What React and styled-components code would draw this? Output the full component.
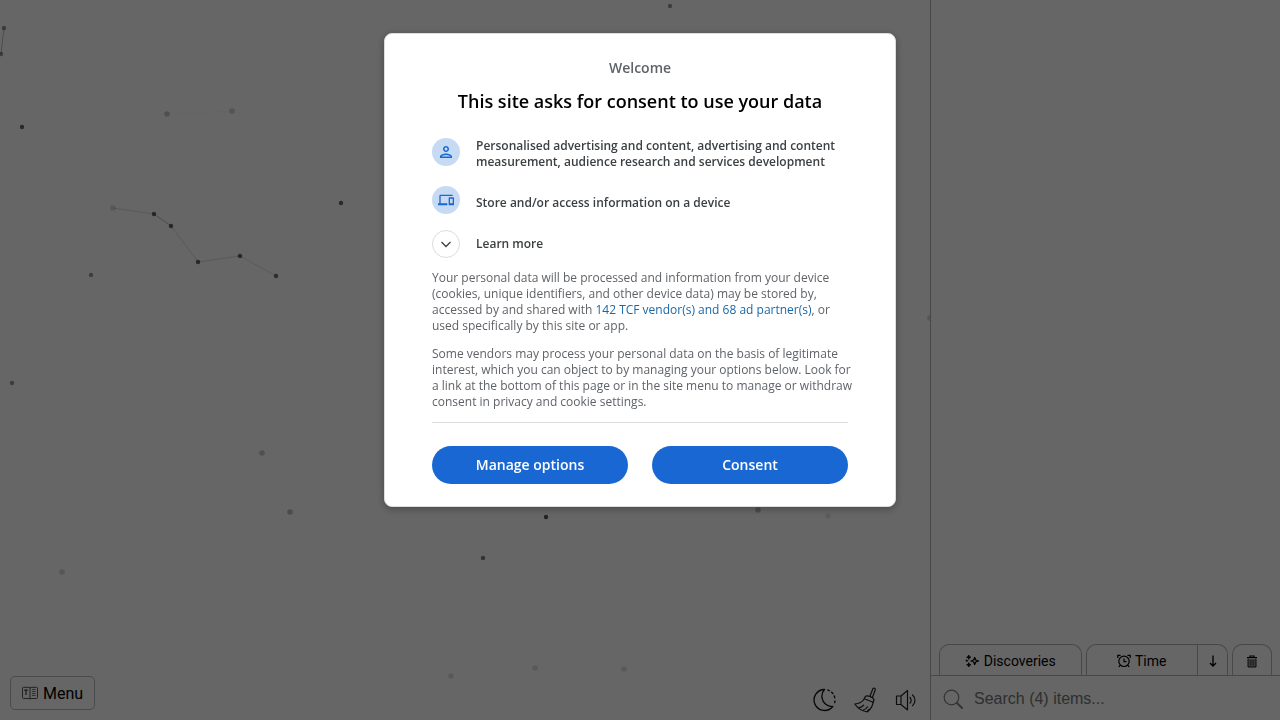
import React, { useState } from 'react';
import styled, { createGlobalStyle } from 'styled-components';
import { MdOutlinePerson, MdOutlineDevices } from 'react-icons/md';

const GlobalStyle = createGlobalStyle`
    * {
        box-sizing: border-box;
    }
    body {
        margin: 0;
        background-color: #fff;
        font-family: Roboto, "Liberation Sans", sans-serif;
    }
    button {
        font-family: inherit;
        cursor: pointer;
    }
    h1, p, ul {
        margin: 0;
        padding: 0;
    }
`;

const Page = styled.div`
    display: flex;
    min-height: 100vh;
`;

const Board = styled.main`
    position: relative;
    flex: 1;
    min-width: 0;
    display: flex;
    align-items: flex-end;
    justify-content: space-between;
`;

const Sky = styled.svg`
    position: absolute;
    inset: 0;
    width: 100%;
    height: 100%;
`;

const MenuButton = styled.button`
    position: relative;
    display: flex;
    align-items: center;
    gap: 5px;
    height: 34px;
    margin: 10px;
    padding: 0 11px;
    border: 1px solid #b9b9b9;
    border-radius: 5px;
    background-color: #fff;
    color: #000;
    font-size: 16px;
`;

const Tools = styled.div`
    position: relative;
    display: flex;
    align-items: center;
    gap: 17px;
    padding: 0 13px 7px;
`;

const ToolButton = styled.button`
    display: flex;
    padding: 0;
    border: none;
    background: none;
    color: #222;
`;

const Sidebar = styled.aside`
    width: 350px;
    display: flex;
    flex-direction: column;
    justify-content: flex-end;
    border-left: 1px solid #b4b4b4;
`;

const Tabs = styled.div`
    display: flex;
    gap: 4px;
    padding: 0 8px;
`;

const TabGroup = styled.div`
    display: flex;
    flex: ${(props) => (props.$small ? '0 0 40px' : '1')};
    height: 31px;
    border: 1px solid #b4b4b4;
    border-bottom: none;
    border-radius: 10px 10px 0 0;
`;

const Tab = styled.button`
    display: flex;
    flex: ${(props) => (props.$narrow ? '0 0 30px' : '1')};
    align-items: center;
    justify-content: center;
    gap: 4px;
    padding: 2px 0 0;
    border: none;
    border-left: ${(props) => (props.$narrow ? '1px solid #b4b4b4' : 'none')};
    background: none;
    color: #000;
    font-size: 14px;
`;

const SearchRow = styled.label`
    display: flex;
    align-items: center;
    gap: 10px;
    height: 45px;
    padding: 2px 12px 0;
    border-top: 1px solid #b4b4b4;
    color: #808080;
`;

const SearchInput = styled.input`
    flex: 1;
    min-width: 0;
    padding: 0;
    border: none;
    outline: none;
    background: none;
    font-family: "Liberation Sans", Arial, sans-serif;
    font-size: 16px;
    &::placeholder {
        color: #757575;
        opacity: 1;
    }
`;

const Overlay = styled.div`
    position: fixed;
    inset: 0;
    display: flex;
    justify-content: center;
    align-items: flex-start;
    padding: 33px 16px;
    overflow: auto;
    background-color: rgba(0, 0, 0, 0.6);
`;

const Dialog = styled.section`
    width: 100%;
    max-width: 512px;
    padding: 24px 47px 22px;
    border: 1px solid #dadce0;
    border-radius: 8px;
    background-color: #fff;
    box-shadow: 0 2px 8px rgba(0, 0, 0, 0.3);
    font-family: "Open Sans", "Noto Sans", sans-serif;
    color: #5f6368;
`;

const Welcome = styled.p`
    font-size: 14px;
    font-weight: 600;
    line-height: 20px;
    text-align: center;
`;

const Title = styled.h1`
    margin: 11px 0 25px;
    color: #000;
    font-size: 18px;
    font-weight: 600;
    line-height: 24px;
    text-align: center;
`;

const Purposes = styled.ul`
    display: flex;
    flex-direction: column;
    gap: 16px;
    list-style: none;
`;

const Purpose = styled.li`
    display: flex;
    gap: 16px;
    color: #3c4043;
    font-size: 12px;
    font-weight: 600;
    line-height: 16px;
`;

const PurposeText = styled.span`
    padding-top: ${(props) => (props.$single ? '9px' : '0')};
`;

const Circle = styled.span`
    display: flex;
    flex: 0 0 28px;
    align-items: center;
    justify-content: center;
    height: 28px;
    border: ${(props) => (props.$outline ? '1px solid #dadce0' : 'none')};
    border-radius: 50%;
    background-color: ${(props) => (props.$outline ? '#fff' : '#c6daf4')};
    color: ${(props) => (props.$outline ? '#3c4043' : '#1967d2')};
`;

const LearnMore = styled.button`
    display: flex;
    align-items: center;
    gap: 16px;
    padding: 0;
    border: none;
    background: none;
    color: inherit;
    font: inherit;
`;

const Text = styled.p`
    margin: 12px -4px 0 0;
    font-size: 12px;
    line-height: 16px;
    a {
        color: #1967a8;
        text-decoration: none;
    }
`;

const Actions = styled.div`
    display: flex;
    gap: 24px;
    margin-top: 12px;
    padding-top: 23px;
    border-top: 1px solid #dadce0;
`;

const ActionButton = styled.button`
    flex: 1;
    height: 38px;
    padding: 0 0 2px;
    border: none;
    border-radius: 19px;
    background-color: #1967d2;
    color: #fff;
    font-size: 14px;
    font-weight: 600;
`;

// x, y, opacity
const stars = [
    [4, 28, 0.4], [1, 54, 0.4], [22, 127, 0.6], [167, 114, 0.22], [232, 111, 0.18],
    [670, 6, 0.4], [341, 203, 0.6], [113, 208, 0.14], [154, 214, 0.6], [171, 226, 0.6],
    [198, 262, 0.6], [240, 256, 0.6], [276, 276, 0.55], [91, 275, 0.4], [12, 383, 0.4],
    [262, 453, 0.22], [290, 512, 0.25], [62, 572, 0.16], [546, 517, 0.65], [483, 558, 0.5],
    [758, 510, 0.25], [828, 516, 0.1], [535, 668, 0.13], [624, 669, 0.13], [451, 676, 0.13],
    [930, 318, 0.16],
];

const lines = [
    [4, 28, 1, 54, 0.25], [113, 208, 154, 214, 0.13], [154, 214, 171, 226, 0.25],
    [171, 226, 198, 262, 0.13], [198, 262, 240, 256, 0.15], [240, 256, 276, 276, 0.12],
    [167, 114, 232, 111, 0.02],
];

const StarSky = () => (
    <Sky viewBox="0 0 930 720" preserveAspectRatio="xMinYMin slice" aria-hidden="true">
        {lines.map(([x1, y1, x2, y2, o]) => (
            <line key={`${x1}-${y1}`} x1={x1} y1={y1} x2={x2} y2={y2} stroke="#000" strokeOpacity={o} />
        ))}
        {stars.map(([x, y, o]) => (
            <circle key={`${x}-${y}`} cx={x} cy={y} r={o < 0.35 ? 2.8 : 2.2} fillOpacity={o} />
        ))}
    </Sky>
);

const BookIcon = () => (
    <svg width="16" height="14" viewBox="0 0 16 14" fill="none" stroke="#555" strokeWidth="1">
        <path d="M8 2L7 1.300H1.500C.9 1.300.5 1.600.5 2.200V11.500C.5 12.100.9 12.500 1.500 12.500H7L8 13L9 12.500H14.500C15.100 12.500 15.500 12.100 15.500 11.500V2.200C15.500 1.600 15.100 1.300 14.500 1.300H9L8 2V13" />
        <path d="M10 3.500H13.500M10 5.500H13.500M10 7.500H13.500M10 9.500H13.500" strokeWidth=".8" />
        <path d="M2.500 4.500V4H5.500V4.500M4 4V9" stroke="#222" />
    </svg>
);

const MoonIcon = () => (
    <svg width="24" height="24" viewBox="0 0 24 24" fill="none" stroke="#111" strokeWidth="1.300" strokeLinecap="round" strokeLinejoin="round">
        <path d="M11.500 1.500A10.500 10.500 0 1 0 19.800 18.500C14.500 19 9.800 15 9 9.800C8.600 6.500 9.500 3.500 11.500 1.500Z" />
        <path d="M14.800 2L16.300 2.700M18.600 4.200L19.900 5.500M21.300 8L21.800 9.800M22 12.800L21.700 14.600" />
    </svg>
);

const BroomIcon = () => (
    <svg width="24" height="26" viewBox="0 0 24 26" fill="none" stroke="currentColor" strokeWidth="1.200" strokeLinecap="round" strokeLinejoin="round">
        <path d="M15.800 9.500L18.900 1.800C19.400.6 21.700 1.300 21.300 2.700L18.400 10.500" />
        <path d="M11.500 9.200C14 8.200 19.200 10.300 20.100 12.700L19.200 15.200L10.300 11.700Z" />
        <path d="M10.300 11.700C8 15.500 5 16.800.8 17C3.800 21.300 8.800 24.500 13.500 24.800C16.500 22.500 18.500 19.500 19.200 15.200" />
        <path d="M5 20.600C7 20.400 8.500 19.500 9.700 18.100M9 23.300C11 22.600 12.500 21.500 13.500 19.800M13.200 24.300L15 22.300" />
    </svg>
);

const SpeakerIcon = () => (
    <svg width="22" height="22" viewBox="0 0 22 22" fill="none" stroke="currentColor" strokeWidth="1.200" strokeLinecap="round" strokeLinejoin="round">
        <path d="M1.500 7H6V15.500H1.500ZM6 7L12.500 1.500V21L6 15.500" />
        <path d="M15 8.500C16.500 10 16.500 12.800 15 14.200M17.500 6C20.800 8.800 20.800 13.800 17.500 16.700" />
    </svg>
);

const SparklesIcon = () => (
    <svg width="15" height="14" viewBox="0 0 15 14" fill="none" stroke="#000" strokeWidth="1.300" strokeLinejoin="round">
        <path d="M9.700 3.500L10.700 6L13.500 7L10.700 8L9.700 10.500L8.700 8L6 7L8.700 6Z" />
        <path d="M3.800 1L4.400 2.600L6 3.200L4.400 3.800L3.800 5.400L3.200 3.800L1.600 3.200L3.200 2.600ZM3.800 8.600L4.400 10.200L6 10.800L4.400 11.400L3.800 13L3.200 11.400L1.600 10.800L3.200 10.200ZM1.800 5.700L2.800 6.700L1.800 7.700L.8 6.700Z" fill="#000" strokeWidth=".7" />
    </svg>
);

const ClockIcon = () => (
    <svg width="14" height="14" viewBox="0 0 14 14" fill="none" stroke="#000" strokeWidth="1.200">
        <circle cx="7" cy="7.300" r="5.200" />
        <path d="M7 4.500V7.700H9.500M.8 4V1.300H3.600M10.400 1.300H13.200V4M3 11.300L1.800 13M11 11.300L12.200 13" />
    </svg>
);

const ArrowIcon = () => (
    <svg width="8" height="12" viewBox="0 0 8 12" fill="none" stroke="#000" strokeWidth="1.300">
        <path d="M4 .5V11M1 8L4 11L7 8" />
    </svg>
);

const TrashIcon = () => (
    <svg width="12" height="13" viewBox="0 0 12 13" fill="none" stroke="#000">
        <path d="M1 2.500H11M4 2.500V1H8V2.500" strokeWidth="1.200" />
        <path d="M2 3.500V12H10V3.500" fill="#999" stroke="#222" />
        <path d="M4.500 5V10.500M6 5V10.500M7.500 5V10.500" stroke="#333" strokeWidth=".6" />
    </svg>
);

const ChevronIcon = () => (
    <svg width="12" height="12" viewBox="0 0 12 12" fill="none" stroke="currentColor" strokeWidth="1.300">
        <path d="M1.500 4L6 8.500L10.500 4" />
    </svg>
);

const SearchIcon = () => (
    <svg width="21" height="21" viewBox="0 0 21 21" fill="none" stroke="currentColor" strokeWidth="1.200" strokeLinecap="round">
        <circle cx="8.500" cy="8.500" r="7.300" />
        <path d="M14 14L19 19" strokeWidth="2" />
    </svg>
);

const App = () => {
    const [search, setSearch] = useState('');
    const [open, setOpen] = useState(true);

    return (
        <>
            <GlobalStyle />
            <Page>
                <Board>
                    <StarSky />
                    <MenuButton type="button"><BookIcon />Menu</MenuButton>
                    <Tools>
                        <ToolButton type="button" aria-label="Dark mode"><MoonIcon /></ToolButton>
                        <ToolButton type="button" aria-label="Clear"><BroomIcon /></ToolButton>
                        <ToolButton type="button" aria-label="Sound"><SpeakerIcon /></ToolButton>
                    </Tools>
                </Board>
                <Sidebar>
                    <Tabs>
                        <TabGroup>
                            <Tab type="button"><SparklesIcon />Discoveries</Tab>
                        </TabGroup>
                        <TabGroup>
                            <Tab type="button"><ClockIcon />Time</Tab>
                            <Tab type="button" $narrow aria-label="Sort direction"><ArrowIcon /></Tab>
                        </TabGroup>
                        <TabGroup $small>
                            <Tab type="button" aria-label="Delete"><TrashIcon /></Tab>
                        </TabGroup>
                    </Tabs>
                    <SearchRow>
                        <SearchIcon />
                        <SearchInput
                            type="text"
                            aria-label="Search items"
                            placeholder="Search (4) items..."
                            value={search}
                            onChange={(e) => setSearch(e.target.value)}
                        />
                    </SearchRow>
                </Sidebar>
            </Page>
            {open && (
                <Overlay>
                    <Dialog role="dialog" aria-modal="true" aria-labelledby="consent-title">
                        <Welcome>Welcome</Welcome>
                        <Title id="consent-title">This site asks for consent to use your data</Title>
                        <Purposes>
                            <Purpose>
                                <Circle><MdOutlinePerson size={18} /></Circle>
                                <PurposeText>
                                    Personalised advertising and content, advertising and content measurement, audience research and services development
                                </PurposeText>
                            </Purpose>
                            <Purpose>
                                <Circle><MdOutlineDevices size={16} /></Circle>
                                <PurposeText $single>Store and/or access information on a device</PurposeText>
                            </Purpose>
                            <Purpose>
                                <LearnMore type="button">
                                    <Circle $outline><ChevronIcon /></Circle>
                                    Learn more
                                </LearnMore>
                            </Purpose>
                        </Purposes>
                        <Text>
                            Your personal data will be processed and information from your device (cookies, unique identifiers, and other device data) may be stored by, accessed by and shared with <a href="#vendors">142 TCF vendor(s) and 68 ad partner(s)</a>, or used specifically by this site or app.
                        </Text>
                        <Text>
                            Some vendors may process your personal data on the basis of legitimate interest, which you can object to by managing your options below. Look for a link at the bottom of this page or in the site menu to manage or withdraw consent in privacy and cookie settings.
                        </Text>
                        <Actions>
                            <ActionButton type="button">Manage options</ActionButton>
                            <ActionButton type="button" onClick={() => setOpen(false)}>Consent</ActionButton>
                        </Actions>
                    </Dialog>
                </Overlay>
            )}
        </>
    );
};

export default App;
